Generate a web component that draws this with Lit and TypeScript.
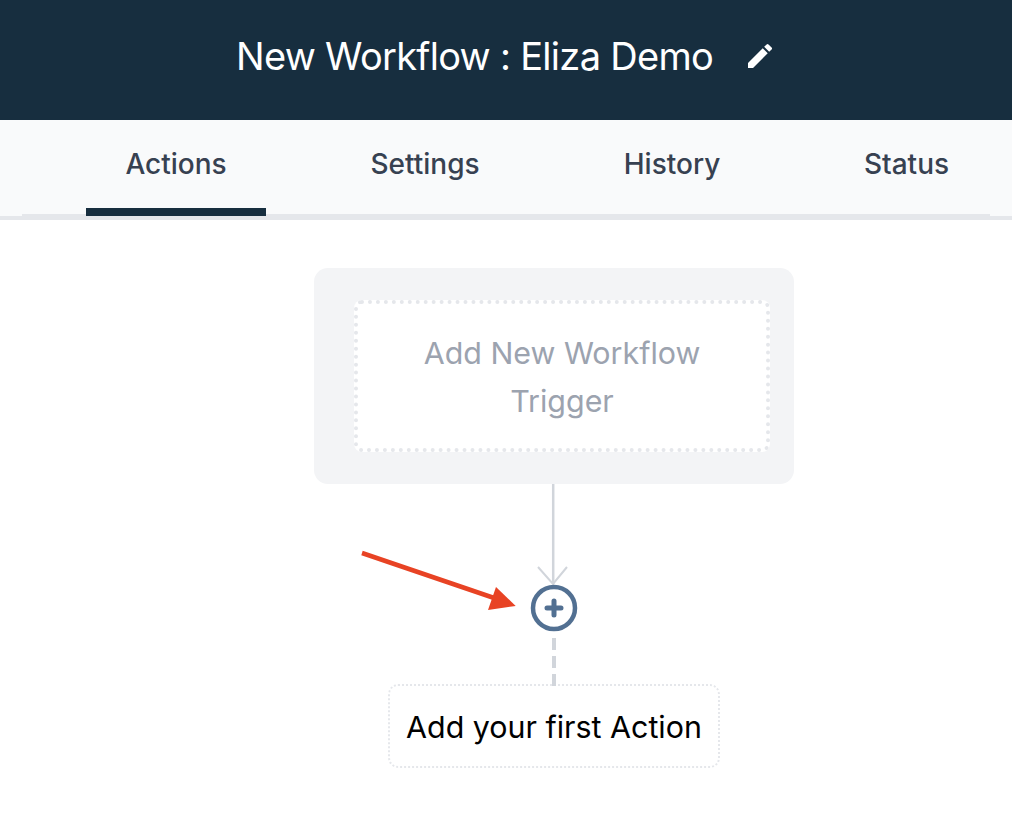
import { LitElement, html, css } from "lit";
import { customElement } from "lit/decorators.js";

@customElement("app-root")
export class AppRoot extends LitElement {
  static styles = css`
    :host { display: block; width: 1012px; height: 834px; background: #fff; font-family: Inter, "Liberation Sans", sans-serif; overflow: hidden; position: relative; }
    .header { height: 120px; background: #172e3f; display: flex; align-items: center; color: #fff; padding-left: 236px; box-sizing: border-box; }
    .title { font-size: 38px; font-weight: 400; line-height: 40px; letter-spacing: -0.7px; white-space: nowrap; margin-top: -8px; }
    .pencil { width: 32px; height: 32px; margin-left: 31px; margin-top: -8px; display: block; }
    .tabbar { height: 100px; box-sizing: border-box; background: #f9fafb; border-bottom: 4px solid #e5e7eb; position: relative; }
    .tabs { height: 96px; margin: 0 22px; display: grid; grid-template-columns: 64px 180px 104px 110px 145px 94px 145px 85px; position: relative; }
    .tabs::after { content: ""; position: absolute; left: 0; right: 0; bottom: 0; height: 2px; background: #e5e7eb; }
    .tab { grid-row: 1; font-size: 28px; font-weight: 500; color: #374151; display: flex; justify-content: center; padding-top: 26px; line-height: 36px; box-sizing: border-box; white-space: nowrap; position: relative; z-index: 1; }
    .tab.active { border-bottom: 8px solid #172e3f; }
    .canvas { display: flex; flex-direction: column; padding: 48px 0 0 314px; align-items: flex-start; }
    .trigger { width: 480px; height: 216px; box-sizing: border-box; background: #f3f4f6; border-radius: 14px; padding: 32px 24px 32px 40px; }
    .slot { height: 152px; box-sizing: border-box; background: #fff; border: 4px dotted #e5e7eb; border-radius: 8px; padding-top: 2px; display: flex; align-items: center; justify-content: center; text-align: center; font-size: 30.4px; line-height: 48px; color: #9ca3af; }
    .flow { display: block; position: relative; z-index: 1; overflow: visible; margin-left: 200px; width: 80px; height: 200px; }
    .action { width: 332px; height: 84px; box-sizing: border-box; margin-left: 74px; padding-top: 2px; border: 2px dotted #e5e7eb; border-radius: 10px; display: flex; align-items: center; justify-content: center; font-size: 30.4px; color: #000; white-space: nowrap; }
    .arrow { position: absolute; left: 350px; top: 540px; width: 180px; height: 80px; }
  `;

  render() {
    return html`
      <div class="header">
        <span class="title">New Workflow : Eliza Demo</span>
        <svg class="pencil" viewBox="0 0 24 24" fill="#fff"><path d="M3 17.25V21h3.75L17.81 9.94l-3.75-3.75L3 17.25zM20.71 7.04a1 1 0 0 0 0-1.41l-2.34-2.34a1 1 0 0 0-1.41 0l-1.83 1.83 3.75 3.75 1.83-1.83z"/></svg>
      </div>
      <div class="tabbar">
        <div class="tabs">
          <div class="tab active" style="grid-column:2">Actions</div>
          <div class="tab" style="grid-column:4">Settings</div>
          <div class="tab" style="grid-column:6">History</div>
          <div class="tab" style="grid-column:8">Status</div>
        </div>
      </div>
      <div class="canvas">
        <div class="trigger"><div class="slot"><span>Add New Workflow<br />Trigger</span></div></div>
        <svg class="flow" viewBox="0 0 80 200" fill="none">
          <path d="M39.200 0V100" stroke="#d1d5db" stroke-width="2.500" />
          <path d="M24 83L39 100L53 83" stroke="#d1d5db" stroke-width="2" />
          <circle cx="40" cy="124" r="21" fill="#fff" stroke="#527092" stroke-width="4.500" />
          <path d="M33 124H47M40 117V131" stroke="#527092" stroke-width="5" stroke-linecap="round" />
          <path d="M40 154V202" stroke="#d1d5db" stroke-width="4" stroke-dasharray="12 6" />
        </svg>
        <div class="action">Add your first Action</div>
      </div>
      <svg class="arrow" viewBox="0 0 180 80">
        <path d="M12 13L150 60" stroke="#e84324" stroke-width="4.500" />
        <path d="M165.700 66L146 47L138 70Z" fill="#e84324" />
      </svg>
    `;
  }
}
